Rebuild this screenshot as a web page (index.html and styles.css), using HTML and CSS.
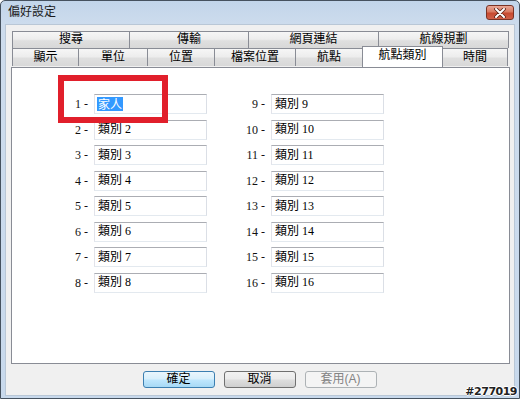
FILE: index.html
```html
<!DOCTYPE html>
<html lang="zh-Hant">
<head>
<meta charset="utf-8">
<title>偏好設定</title>
<link rel="stylesheet" href="styles.css">
</head>
<body>
<div class="window">
  <div class="titlebar">
    <span class="title">偏好設定</span>
    <span class="close">
      <svg width="14" height="10" viewBox="0 0 14 10">
        <path d="M3 1 L11 9 M11 1 L3 9" stroke="#5a2216" stroke-width="3.6" stroke-linecap="round"/>
        <path d="M3 1 L11 9 M11 1 L3 9" stroke="#ffffff" stroke-width="2" stroke-linecap="round"/>
      </svg>
    </span>
  </div>
  <div class="client">
    <div class="tabctl">
      <div class="tabrow">
        <div class="tab t117">搜尋</div>
        <div class="tab t119">傳輸</div>
        <div class="tab t130">網頁連結</div>
        <div class="tab t131 last">航線規劃</div>
      </div>
      <div class="tabrow">
        <div class="tab t66">顯示</div>
        <div class="tab t69">單位</div>
        <div class="tab t67">位置</div>
        <div class="tab t81">檔案位置</div>
        <div class="tab t67">航點</div>
        <div class="tab t81 selected">航點類別</div>
        <div class="tab t66 last">時間</div>
      </div>
      <div class="panel">
        <div class="grid">
          <div class="lbl">1 -</div><div class="field"><span class="sel">家人</span></div>
          <div class="lbl">9 -</div><div class="field">類別 9</div>
          <div class="lbl">2 -</div><div class="field">類別 2</div>
          <div class="lbl">10 -</div><div class="field">類別 10</div>
          <div class="lbl">3 -</div><div class="field">類別 3</div>
          <div class="lbl">11 -</div><div class="field">類別 11</div>
          <div class="lbl">4 -</div><div class="field">類別 4</div>
          <div class="lbl">12 -</div><div class="field">類別 12</div>
          <div class="lbl">5 -</div><div class="field">類別 5</div>
          <div class="lbl">13 -</div><div class="field">類別 13</div>
          <div class="lbl">6 -</div><div class="field">類別 6</div>
          <div class="lbl">14 -</div><div class="field">類別 14</div>
          <div class="lbl">7 -</div><div class="field">類別 7</div>
          <div class="lbl">15 -</div><div class="field">類別 15</div>
          <div class="lbl">8 -</div><div class="field">類別 8</div>
          <div class="lbl">16 -</div><div class="field">類別 16</div>
        </div>
      </div>
    </div>
    <div class="buttons">
      <div class="btn default">確定</div>
      <div class="btn">取消</div>
      <div class="btn disabled">套用(A)</div>
    </div>
  </div>
  <div class="annot"></div>
  <div class="watermark">#277019</div>
</div>
</body>
</html>
```

FILE: styles.css
```css
html, body {
  margin: 0;
  padding: 0;
  width: 520px;
  height: 399px;
  overflow: hidden;
  background: #ffffff;
}

.window {
  position: relative;
  box-sizing: border-box;
  width: 520px;
  height: 399px;
  border: 1px solid #46525f;
  border-radius: 5px 5px 0 0;
  padding: 0 4px 2px 4px;
  display: flex;
  flex-direction: column;
  background: linear-gradient(to bottom, #c2d5ea 0px, #cddced 24px, #c8d9ec 100%);
  font-family: "Liberation Sans", "Noto Sans CJK TC", sans-serif;
  font-size: 12px;
  color: #000;
}

.titlebar {
  height: 23px;
  display: flex;
  justify-content: space-between;
  align-items: flex-start;
  padding-left: 3px;
}

.title {
  margin-top: 4px;
  line-height: 14px;
  font-size: 12px;
  color: #1b1b1b;
}

.close {
  margin-top: 4px;
  margin-right: 1px;
  box-sizing: border-box;
  width: 28px;
  height: 15px;
  border: 1px solid #7a3325;
  border-radius: 3px;
  background: linear-gradient(to bottom, #e9a796 0%, #d97a62 45%, #c84a30 55%, #d0614a 100%);
  display: flex;
  align-items: center;
  justify-content: center;
}

.client {
  flex: 1;
  box-sizing: border-box;
  background: #f0f0f0;
  border: 1px solid #b9c7d6;
  padding: 6px 5px 0 5px;
  display: flex;
  flex-direction: column;
}

.tabctl {
  display: flex;
  flex-direction: column;
  width: 499px;
}

.tabrow {
  display: flex;
  margin: 0 1px;
  width: 497px;
}

.tab {
  box-sizing: border-box;
  height: 17px;
  border-top: 1px solid #898c95;
  border-left: 1px solid #898c95;
  background: linear-gradient(to bottom, #f6f6f6 0%, #ededed 45%, #dfdfdf 55%, #d8d8d8 100%);
  text-align: center;
  line-height: 15px;
  font-size: 12px;
}

.tabrow + .tabrow .tab {
  height: 18px;
  line-height: 17px;
}

.tab.last {
  border-right: 1px solid #898c95;
}

.t66 { width: 66px; }
.t67 { width: 67px; }
.t69 { width: 69px; }
.t81 { width: 81px; }
.t117 { width: 117px; }
.t119 { width: 119px; }
.t130 { width: 130px; }
.t131 { width: 131px; }

.tabrow + .tabrow .tab.selected {
  position: relative;
  z-index: 1;
  margin-top: -2px;
  height: 21px;
  line-height: 16px;
  background: #ffffff;
  border-right: 1px solid #898c95;
  margin-right: -1px;
}

.panel {
  box-sizing: border-box;
  height: 297px;
  border: 1px solid #898c95;
  background: #ffffff;
  padding: 26px 0 0 46px;
}

.grid {
  display: grid;
  grid-template-columns: 36px 113px 64px 113px;
  grid-auto-rows: 20px;
  row-gap: 5.5px;
}

.lbl {
  text-align: right;
  padding-right: 6px;
  line-height: 20px;
  font-family: "Liberation Serif", "Noto Sans CJK TC", serif;
  font-size: 12px;
  color: #111;
}

.field {
  box-sizing: border-box;
  height: 20px;
  border: 1px solid;
  border-color: #abadb3 #dbdfe6 #e3e9ef #e2e3ea;
  background: #ffffff;
  padding-left: 3px;
  line-height: 17px;
  font-family: "Liberation Serif", "Noto Sans CJK TC", serif;
  font-size: 12px;
  color: #000;
  display: flex;
  align-items: center;
}

.sel {
  display: inline-block;
  background: #3399ff;
  color: #ffffff;
  line-height: 14px;
  height: 14px;
  margin-left: -1px;
  padding: 0 1px;
  font-family: "Noto Sans CJK TC", sans-serif;
}

.buttons {
  display: flex;
  justify-content: center;
  gap: 9px;
  margin-top: 7px;
  padding-right: 1px;
}

.btn {
  box-sizing: border-box;
  width: 72px;
  height: 17px;
  border: 1px solid #707070;
  border-radius: 3px;
  background: linear-gradient(to bottom, #f2f2f2 0%, #ebebeb 45%, #dddddd 55%, #cfcfcf 100%);
  text-align: center;
  line-height: 15px;
  font-size: 12px;
  color: #000;
}

.btn.default {
  border-color: #3c7fb1;
  background: linear-gradient(to bottom, #eaf6fd 0%, #d9f0fc 45%, #bee6fd 55%, #a7d9f5 100%);
}

.btn.disabled {
  border-color: #adb2b5;
  background: #f4f4f4;
  color: #838383;
}

.annot {
  position: absolute;
  left: 57px;
  top: 74px;
  width: 110px;
  height: 48px;
  box-sizing: border-box;
  border: 6px solid #e11f2b;
  pointer-events: none;
}

.watermark {
  position: absolute;
  right: 2px;
  bottom: 1px;
  font-family: "DejaVu Sans", sans-serif;
  font-weight: bold;
  font-size: 11px;
  line-height: 11px;
  letter-spacing: -0.5px;
  color: #222;
  text-shadow: 1px 0 0 #fff, -1px 0 0 #fff, 0 1px 0 #fff, 0 -1px 0 #fff;
}
```
